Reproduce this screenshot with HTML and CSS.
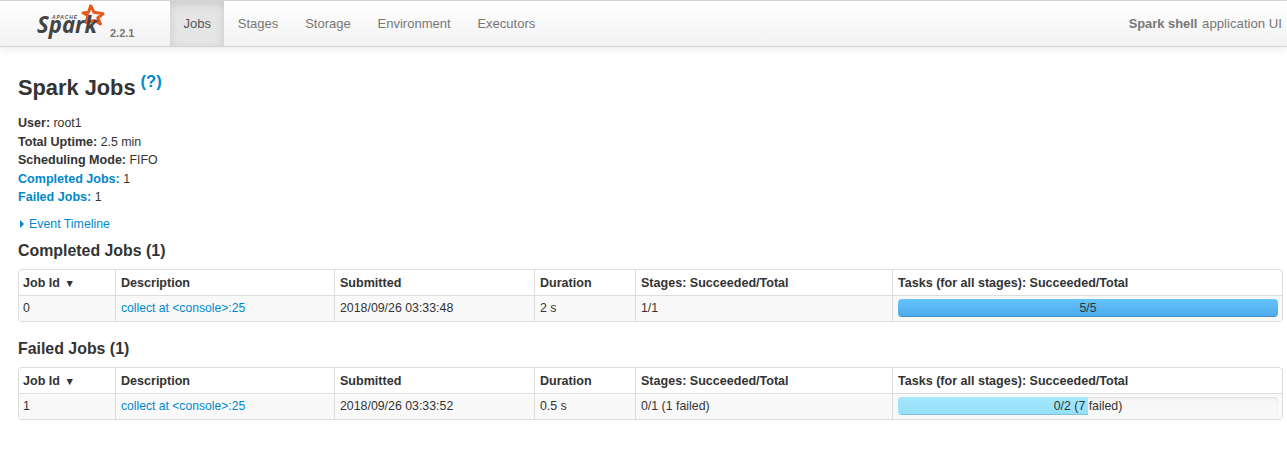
FILE: index.html
```html
<!DOCTYPE html>
<html lang="en">
<head>
<meta charset="utf-8">
<title>Spark shell - Spark Jobs</title>
<link rel="stylesheet" href="styles.css">
</head>
<body>
<header class="navbar">
  <a class="brand" href="#">
    <svg class="logo" width="66" height="36" viewBox="0 0 66 36">
      <polygon class="logo-star" points="53.700,2.800 57,9.300 66,10.800 60.700,15 63.500,21 57.500,17.500 49,19.500 51,12.500 46,10 51.500,9.300"/>
      <text class="logo-apache" x="15" y="15.500" textLength="25">APACHE</text>
      <text class="logo-word" x="0" y="30" textLength="60" lengthAdjust="spacingAndGlyphs">Spark</text>
    </svg>
    <span class="version">2.2.1</span>
  </a>
  <nav class="tabs">
    <a class="tab active" href="#">Jobs</a>
    <a class="tab" href="#">Stages</a>
    <a class="tab" href="#">Storage</a>
    <a class="tab" href="#">Environment</a>
    <a class="tab" href="#">Executors</a>
  </nav>
  <p class="app-name"><strong>Spark shell</strong> application UI</p>
</header>
<main class="page">
  <h1 class="title">Spark Jobs <sup class="help"><a href="#">(?)</a></sup></h1>
  <ul class="summary">
    <li><strong>User:</strong> root1</li>
    <li><strong>Total Uptime:</strong> 2.5 min</li>
    <li><strong>Scheduling Mode:</strong> FIFO</li>
    <li><a href="#"><strong>Completed Jobs:</strong></a> 1</li>
    <li><a href="#"><strong>Failed Jobs:</strong></a> 1</li>
  </ul>
  <a class="timeline" href="#"><span class="arrow"></span>Event Timeline</a>

  <h2 class="section">Completed Jobs (1)</h2>
  <table class="jobs">
    <colgroup><col class="c1"><col class="c2"><col class="c3"><col class="c4"><col class="c5"><col></colgroup>
    <thead>
      <tr><th>Job Id <span class="sort">▼</span></th><th>Description</th><th>Submitted</th><th>Duration</th><th>Stages: Succeeded/Total</th><th>Tasks (for all stages): Succeeded/Total</th></tr>
    </thead>
    <tbody>
      <tr>
        <td>0</td><td><a href="#">collect at &lt;console&gt;:25</a></td><td>2018/09/26 03:33:48</td><td>2 s</td><td>1/1</td>
        <td><div class="progress"><div class="bar full" style="width:100%"></div><span class="progress-label">5/5</span></div></td>
      </tr>
    </tbody>
  </table>

  <h2 class="section">Failed Jobs (1)</h2>
  <table class="jobs">
    <colgroup><col class="c1"><col class="c2"><col class="c3"><col class="c4"><col class="c5"><col></colgroup>
    <thead>
      <tr><th>Job Id <span class="sort">▼</span></th><th>Description</th><th>Submitted</th><th>Duration</th><th>Stages: Succeeded/Total</th><th>Tasks (for all stages): Succeeded/Total</th></tr>
    </thead>
    <tbody>
      <tr>
        <td>1</td><td><a href="#">collect at &lt;console&gt;:25</a></td><td>2018/09/26 03:33:52</td><td>0.5 s</td><td>0/1 (1 failed)</td>
        <td><div class="progress"><div class="bar partial" style="width:50%"></div><span class="progress-label">0/2 (7 failed)</span></div></td>
      </tr>
    </tbody>
  </table>
</main>
</body>
</html>
```
FILE: styles.css
```css
* { box-sizing: border-box; }
html, body { margin: 0; padding: 0; }
body {
  font-family: "Liberation Sans", Arial, sans-serif;
  font-size: 12.35px;
  line-height: 18.57px;
  color: #333;
  background: #fff;
}
strong { font-size: 12.55px; }
a { color: #0088cc; text-decoration: none; }

.navbar {
  display: flex;
  align-items: stretch;
  height: 47px;
  background: linear-gradient(to bottom, #ffffff, #f2f2f2);
  border-top: 1px solid #d4d4d4;
  border-bottom: 1px solid #d4d4d4;
  box-shadow: 0 1px 10px rgba(0, 0, 0, .1);
}
.brand {
  width: 170px;
  padding: 2px 0 0 37px;
  display: flex;
  align-items: flex-start;
  flex: none;
}
.logo { display: block; overflow: visible; flex: none; }
.logo-star { fill: none; stroke: #e25a1c; stroke-width: 3; stroke-linejoin: round; }
.logo-apache { font: italic bold 5px "Liberation Sans", sans-serif; fill: #555; }
.logo-word { font: italic bold 24px "Open Sans", "Liberation Sans", sans-serif; fill: #444; }
.version {
  margin: 23px 0 0 7px;
  font-size: 11px;
  font-weight: bold;
  color: #777;
  line-height: 14px;
}
.tabs { display: flex; flex: none; }
.tab {
  padding: 0 13.45px;
  font-size: 13px;
  line-height: 45px;
  color: #777;
}
.tab.active {
  color: #555;
  background: #e5e5e5;
  box-shadow: inset 0 3px 8px rgba(0, 0, 0, .125);
}
.app-name {
  margin: 0 5px 0 auto;
  font-size: 13.2px;
  line-height: 45px;
  color: #777;
}
.app-name strong { font-size: 12.9px; margin-right: 1px; }

.page { padding: 0 4px 0 18px; }
.title {
  margin: 26px 0 0;
  font-size: 21.8px;
  font-weight: bold;
  line-height: 30px;
  color: #333;
}
.help { font-size: 16.5px; line-height: 0; vertical-align: 8px; margin-left: -1px; }
.summary { list-style: none; margin: 11px 0 0; padding: 0; }
.timeline { display: flex; align-items: center; margin-top: 8px; }
.arrow {
  width: 0;
  height: 0;
  margin: 0 5px 0 2px;
  border-left: 4px solid #0088cc;
  border-top: 4px solid transparent;
  border-bottom: 4px solid transparent;
}
.section {
  margin: 8px 0 8px;
  font-size: 15.9px;
  font-weight: bold;
  line-height: 20px;
  color: #333;
}
.section ~ .section { margin-top: 17px; }

.jobs {
  width: 100%;
  table-layout: fixed;
  border-collapse: separate;
  border-spacing: 0;
  border: 1px solid #ddd;
  border-radius: 4px;
  margin: 0;
}
.c1 { width: 96px; }
.c2 { width: 219px; }
.c3 { width: 200px; }
.c4 { width: 101px; }
.c5 { width: 257px; }
.jobs th, .jobs td {
  padding: 0 5px;
  text-align: left;
  vertical-align: middle;
  border-left: 1px solid #ddd;
}
.jobs th:first-child, .jobs td:first-child { border-left: 0; padding-left: 4px; }
.jobs th:last-child, .jobs td:last-child { padding-right: 4px; }
.jobs th { height: 26px; font-size: 12.55px; font-weight: bold; border-bottom: 1px solid #ddd; }
.jobs td { height: 25px; padding-bottom: 2px; background: #f9f9f9; }
.jobs td a { font-size: 12.15px; }
.jobs tbody tr td:first-child { border-bottom-left-radius: 3px; }
.jobs tbody tr td:last-child { border-bottom-right-radius: 3px; }
.sort { font-size: 10.5px; margin-left: 1px; vertical-align: 0; }

.progress {
  position: relative;
  height: 18px;
  border-radius: 4px;
  overflow: hidden;
  background: linear-gradient(to bottom, #f5f5f5, #f9f9f9);
  box-shadow: inset 0 1px 2px rgba(0, 0, 0, .1);
  text-align: center;
}
.bar { height: 100%; }
.bar.full {
  background: linear-gradient(to bottom, #64c5ff, #4ea8e8);
  box-shadow: inset 0 -1px 0 rgba(0, 0, 0, .12);
}
.bar.partial {
  background: linear-gradient(to bottom, #a5e8ff, #95def8);
  box-shadow: inset 0 -1px 0 rgba(0, 0, 0, .12);
}
.progress-label {
  position: absolute;
  inset: 0;
  line-height: 18px;
  color: #333;
}
```
